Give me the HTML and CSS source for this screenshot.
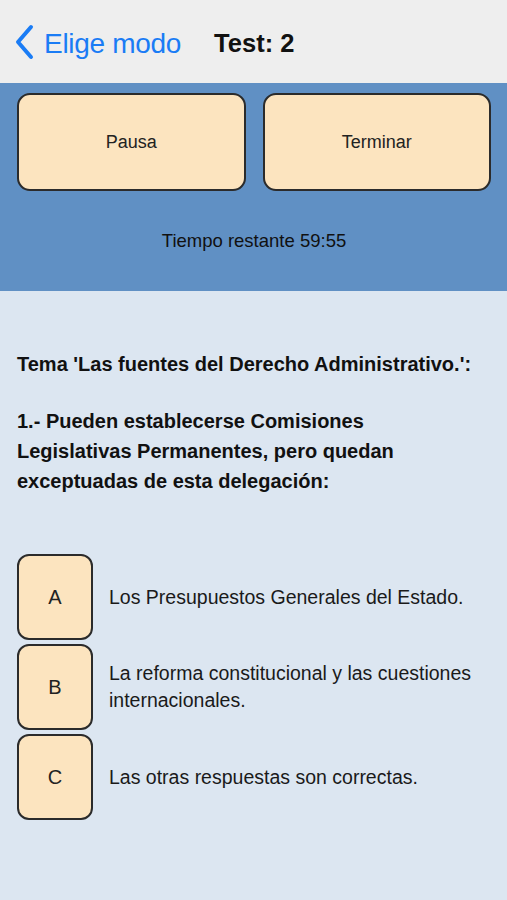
FILE: index.html
```html
<!DOCTYPE html>
<html lang="es">
<head>
  <meta charset="UTF-8">
  <meta name="viewport" content="width=device-width, initial-scale=1.0">
  <title>Test: 2</title>
  <link rel="stylesheet" href="styles.css">
</head>
<body>

  <!-- Navigation bar -->
  <header class="navbar">
    <a class="back" href="#">
      <svg class="chevron" width="20" height="36" viewBox="0 0 20 36">
        <path d="M17 3 L4 18 L17 33" fill="none" stroke="#1a7cf5" stroke-width="4" stroke-linecap="round" stroke-linejoin="round"/>
      </svg>
      <span>Elige modo</span>
    </a>
    <h1 class="title">Test: 2</h1>
  </header>

  <!-- Controls -->
  <section class="controls">
    <div class="control-buttons">
      <button class="btn">Pausa</button>
      <button class="btn">Terminar</button>
    </div>
    <p class="timer">Tiempo restante 59:55</p>
  </section>

  <!-- Question -->
  <main class="content">
    <p class="topic">Tema 'Las fuentes del Derecho Administrativo.':</p>
    <p class="question">1.- Pueden establecerse Comisiones Legislativas Permanentes, pero quedan exceptuadas de esta delegación:</p>

    <ul class="answers">
      <li class="answer">
        <button class="letter">A</button>
        <span class="answer-text">Los Presupuestos Generales del Estado.</span>
      </li>
      <li class="answer">
        <button class="letter">B</button>
        <span class="answer-text">La reforma constitucional y las cuestiones internacionales.</span>
      </li>
      <li class="answer">
        <button class="letter">C</button>
        <span class="answer-text">Las otras respuestas son correctas.</span>
      </li>
    </ul>
  </main>

</body>
</html>
```

FILE: styles.css
```css
* {
  margin: 0;
  padding: 0;
  box-sizing: border-box;
}

body {
  font-family: 'Liberation Sans', Arial, sans-serif;
  background-color: #dce6f1;
  color: #111;
  width: 507px;
  min-height: 900px;
}

/* Navigation bar */
.navbar {
  height: 83px;
  background-color: #eeeeee;
  display: flex;
  align-items: center;
  padding: 4px 0 0 14px;
}

.back {
  display: flex;
  align-items: center;
  gap: 10px;
  color: #1a7cf5;
  text-decoration: none;
  font-size: 28px;
  letter-spacing: -0.3px;
}

.chevron {
  display: block;
  margin-top: -4px;
}

.title {
  margin-left: 33px;
  font-size: 25.5px;
  font-weight: bold;
  color: #111;
}

/* Controls */
.controls {
  background-color: #6090c4;
  height: 208px;
  padding: 10px 16px 0 17px;
}

.control-buttons {
  display: flex;
  gap: 17px;
}

.btn {
  flex: 1;
  height: 98px;
  background-color: #fce4bf;
  border: 2px solid #2b2b2b;
  border-radius: 13px;
  font-family: inherit;
  font-size: 18px;
  color: #222;
}

.timer {
  text-align: center;
  margin-top: 39px;
  font-size: 18.5px;
  color: #111;
}

/* Question */
.content {
  padding: 58px 17px 0 17px;
}

.topic,
.question {
  font-size: 20px;
  line-height: 30px;
  font-weight: bold;
}

.topic {
  margin-bottom: 27px;
}

.question {
  padding-right: 20px;
}

.answers {
  list-style: none;
  margin-top: 58px;
  display: flex;
  flex-direction: column;
  gap: 4px;
}

.answer {
  display: flex;
  align-items: center;
  gap: 16px;
}

.letter {
  flex: none;
  width: 76px;
  height: 86px;
  background-color: #fce4bf;
  border: 2px solid #2b2b2b;
  border-radius: 12px;
  font-family: inherit;
  font-size: 20px;
  color: #222;
}

.answer-text {
  font-size: 19.5px;
  line-height: 27px;
  color: #1a1a1a;
  padding-right: 8px;
}
```
